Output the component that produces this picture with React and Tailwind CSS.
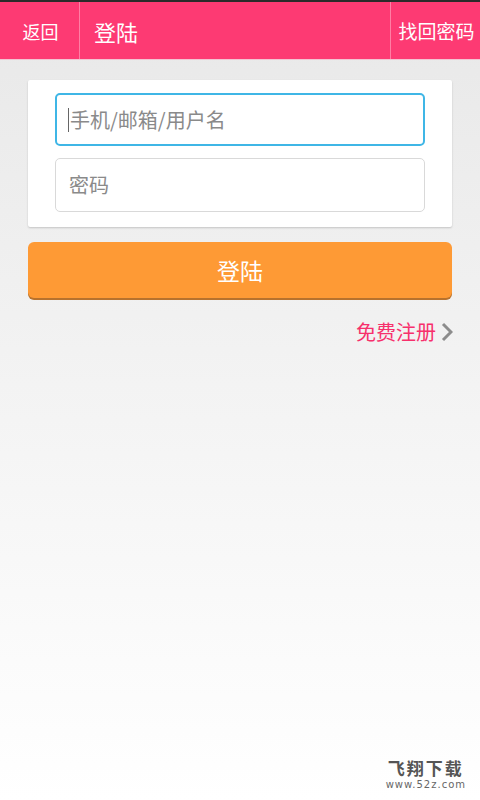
const font = { fontFamily: '"Noto Sans CJK SC", "Noto Sans", sans-serif' };

export default function App() {
  return (
    <div
      className="w-[480px] h-[800px] flex flex-col bg-gradient-to-b from-[#e8e8e8] to-[#ffffff] overflow-hidden"
      style={font}
    >
      {/* Header */}
      <div className="h-[2px] bg-[#2a2a2a]" />
      <header className="h-[58px] flex bg-[#fd3a73] text-white border-b border-[#f4c3d2]">
        <button className="w-[80px] text-[18px] leading-none border-r border-[#ff7ea4] flex items-center justify-center pl-[2px]">
          返回
        </button>
        <h1 className="flex-1 flex items-center pl-[14px] text-[22px] leading-none font-normal">
          登陆
        </h1>
        <button className="w-[90px] text-[19px] leading-none border-l border-[#ff7ea4] flex items-center justify-center pl-[2px]">
          找回密码
        </button>
      </header>

      <main className="flex flex-col px-[28px] pt-[20px]">
        {/* Form card */}
        <div className="bg-white rounded-[2px] shadow-[0_1px_2px_rgba(0,0,0,0.18)] px-[27px] pt-[13px] pb-[15px] flex flex-col gap-[12px]">
          <div className="h-[53px] rounded-[5px] border-2 border-[#3fb6e6] flex items-center pl-[11px] bg-white">
            <span className="w-[1px] h-[24px] bg-[#666] mr-[1px]" />
            <span className="text-[20px] text-[#8a8a8a] leading-none">手机/邮箱/用户名</span>
          </div>
          <div className="h-[54px] rounded-[5px] border border-[#d9d9d9] flex items-center pl-[13px] bg-white">
            <span className="text-[20px] text-[#8a8a8a] leading-none">密码</span>
          </div>
        </div>

        {/* Login button */}
        <button className="mt-[15px] h-[56px] rounded-[6px] bg-[#fe9a35] text-white text-[23px] leading-none shadow-[0_2px_0_#b8722d] flex items-center justify-center">
          登陆
        </button>

        {/* Register link */}
        <div className="mt-[24px] flex items-center justify-end gap-[5px]">
          <span className="text-[20px] text-[#f7306c] leading-none">免费注册</span>
          <svg width="12" height="20" viewBox="0 0 12 20" className="mr-[-1px]">
            <path d="M2 2 L10 10 L2 18" fill="none" stroke="#8c8c8c" strokeWidth="3" />
          </svg>
        </div>
      </main>

      {/* Watermark */}
      <div className="mt-auto mb-[10px] mr-[14px] self-end flex flex-col items-center">
        <span className="text-[17px] font-bold text-[#555] leading-none tracking-[2px]">飞翔下载</span>
        <span className="text-[10px] text-[#666] leading-none mt-[4px] tracking-[1px]" style={{ fontFamily: '"DejaVu Sans", sans-serif' }}>
          www.52z.com
        </span>
      </div>
    </div>
  );
}
